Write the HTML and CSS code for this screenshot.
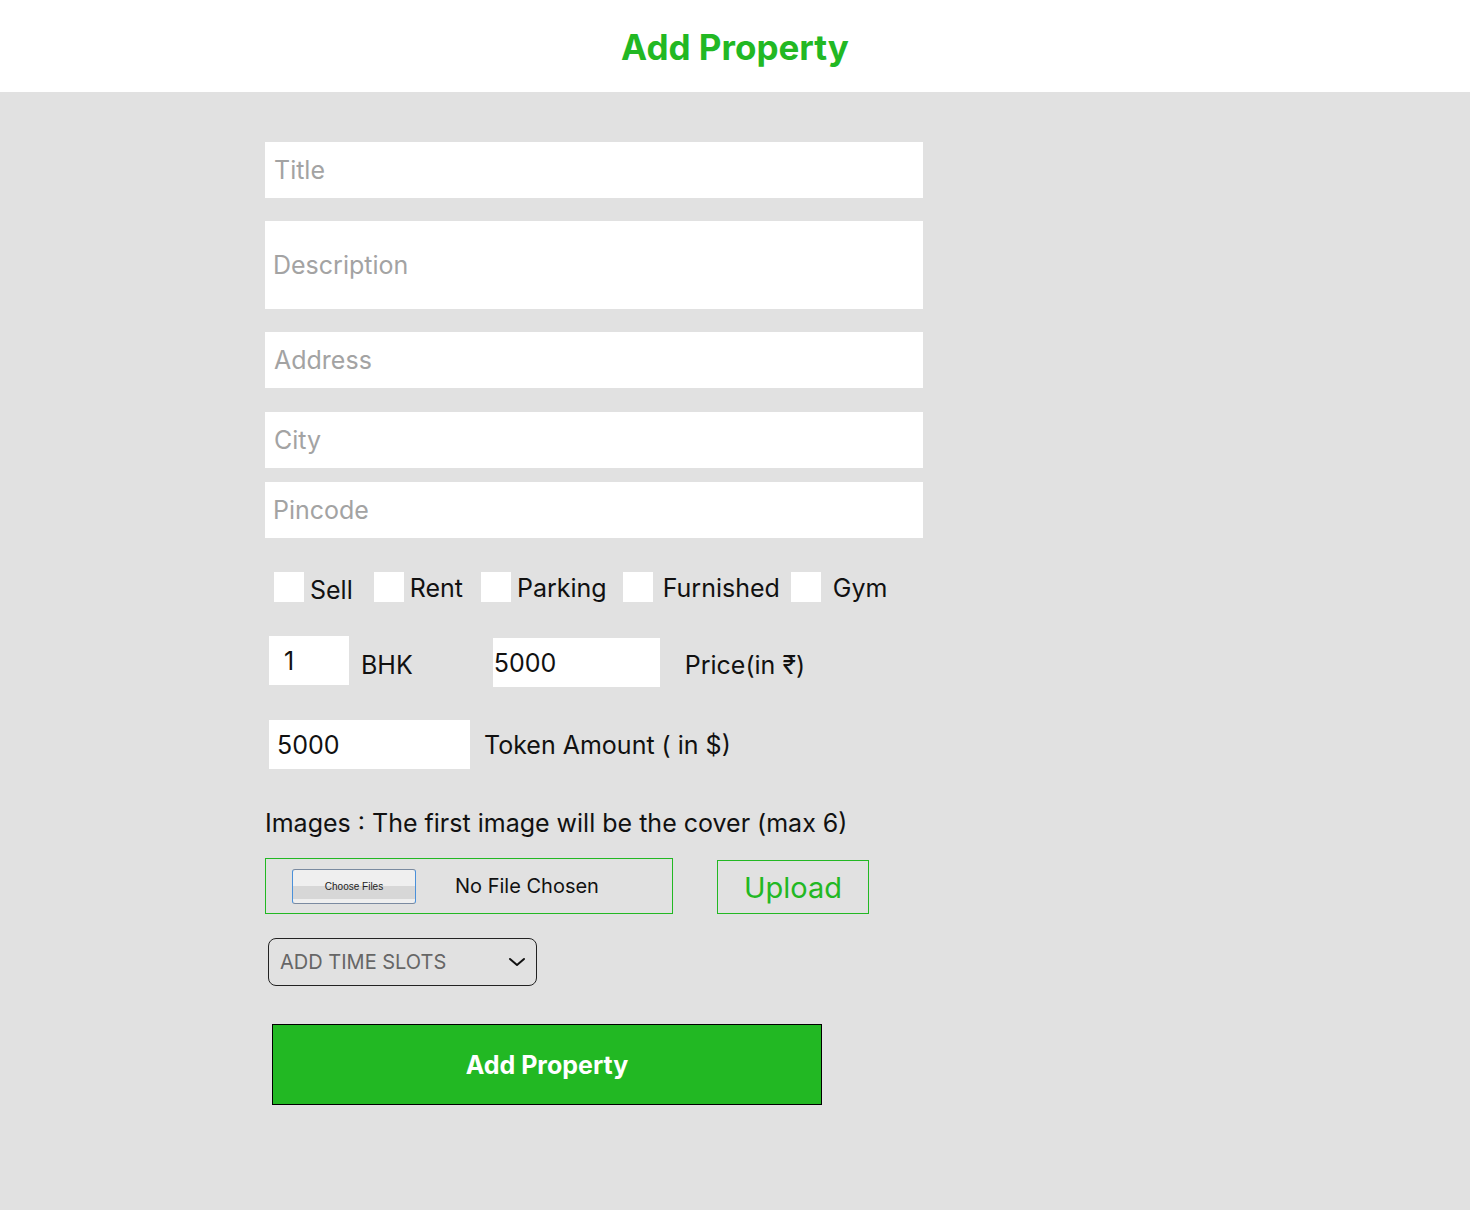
FILE: index.html
```html
<!DOCTYPE html>
<html lang="en">
<head>
<meta charset="utf-8">
<title>Add Property</title>
<link rel="stylesheet" href="styles.css">
</head>
<body>
<header class="topbar">
  <h1 class="page-title">Add Property</h1>
</header>
<main class="main">
  <form class="form">
    <input class="field field-title" type="text" placeholder="Title">
    <input class="field field-desc" type="text" placeholder="Description">
    <input class="field field-address" type="text" placeholder="Address">
    <input class="field field-city" type="text" placeholder="City">
    <input class="field field-pin" type="text" placeholder="Pincode">

    <div class="checks">
      <label class="check check-sell"><span class="box"></span><span class="check-text sell-text">Sell</span></label>
      <label class="check check-rent"><span class="box"></span><span class="check-text">Rent</span></label>
      <label class="check check-parking"><span class="box"></span><span class="check-text">Parking</span></label>
      <label class="check check-furnished"><span class="box"></span><span class="check-text wide">Furnished</span></label>
      <label class="check check-gym"><span class="box"></span><span class="check-text wider">Gym</span></label>
    </div>

    <div class="row row-bhk">
      <div class="num num-bhk">1</div>
      <span class="row-label bhk-label">BHK</span>
      <div class="num num-price">5000</div>
      <span class="row-label price-label">Price(in ₹)</span>
    </div>

    <div class="row row-token">
      <div class="num num-token">5000</div>
      <span class="row-label token-label">Token Amount ( in $)</span>
    </div>

    <p class="images-note">Images : The first image will be the cover (max 6)</p>

    <div class="upload-row">
      <div class="file-box">
        <span class="choose-btn">Choose Files</span>
        <span class="file-text">No File Chosen</span>
      </div>
      <button type="button" class="upload-btn">Upload</button>
    </div>

    <div class="select">
      <span class="select-text">ADD TIME SLOTS</span>
      <svg class="chev" width="18" height="10" viewBox="0 0 18 10"><path d="M2 2 L9 8 L16 2" fill="none" stroke="#111" stroke-width="2" stroke-linecap="round" stroke-linejoin="round"/></svg>
    </div>

    <button type="button" class="submit">Add Property</button>
  </form>
</main>
</body>
</html>
```
FILE: styles.css
```css
* { box-sizing: border-box; }
html, body { margin: 0; padding: 0; }
body {
  font-family: Inter, "Noto Sans", sans-serif;
  color: #111;
  background: #e1e1e1;
}
.topbar {
  height: 92px;
  background: #fff;
  display: flex;
  align-items: center;
  justify-content: center;
}
.page-title {
  margin: 0;
  font-size: 35px;
  font-weight: 700;
  color: #22b823;
  line-height: 1;
  position: relative;
  top: 1px;
}
.main {
  background: #e1e1e1;
  min-height: 1118px;
  padding: 50px 0 0 265px;
}
.form {
  width: 658px;
  display: flex;
  flex-direction: column;
  align-items: flex-start;
}
.field {
  display: block;
  width: 658px;
  height: 56px;
  border: none;
  outline: none;
  background: #fff;
  font-family: Inter, sans-serif;
  font-size: 25px;
  padding: 0 9px;
  color: #111;
}
.field::placeholder { color: #a3a3a3; }
.field-desc { height: 88px; margin-top: 23px; padding-left: 8px; }
.field-address { margin-top: 23px; }
.field-city { margin-top: 24px; }
.field-pin { margin-top: 14px; padding-left: 8px; }

.checks {
  display: flex;
  align-items: center;
  margin: 34px 0 0 9px;
  height: 30px;
}
.check {
  display: flex;
  align-items: center;
  font-size: 25px;
}
.box {
  width: 30px;
  height: 30px;
  background: #fff;
  display: block;
}
.check-text { margin-left: 6px; line-height: 30px; position: relative; top: 1px; }
.sell-text { top: 3px; }
.check-text.wide { margin-left: 10px; }
.check-text.wider { margin-left: 12px; }
.check-sell { margin-right: 21px; }
.check-rent { margin-right: 18px; }
.check-parking { margin-right: 16px; }
.check-furnished { margin-right: 11px; }

.row {
  display: flex;
  align-items: center;
  font-size: 25px;
}
.row-bhk { margin: 35px 0 0 4px; }
.row-bhk .row-label { position: relative; top: 3px; }
.num {
  background: #fff;
  height: 49px;
  display: flex;
  align-items: center;
  font-size: 25px;
}
.num-bhk { width: 80px; padding-left: 15px; position: relative; top: -1px; }
.num-price { width: 167px; padding-left: 1px; position: relative; top: 1px; }
.num-token { width: 201px; padding-left: 8px; }
.bhk-label { margin-left: 12px; }
.num-price { margin-left: 80px; }
.price-label { margin-left: 25px; }
.row-token { margin: 34px 0 0 4px; }
.token-label { margin-left: 14px; }

.images-note {
  margin: 39px 0 0;
  font-size: 25px;
  line-height: 30px;
}

.upload-row {
  display: flex;
  align-items: flex-end;
  margin-top: 20px;
}
.file-box {
  width: 408px;
  height: 56px;
  border: 1px solid #22b823;
  display: flex;
  align-items: center;
  padding-left: 26px;
}
.choose-btn {
  width: 124px;
  height: 35px;
  border: 1px solid #7a8aa0;
  border-left-color: #4a90d9;
  border-right-color: #4a90d9;
  border-radius: 3px;
  background: linear-gradient(#efefef 0, #efefef 47%, #d7d7d7 47%, #d7d7d7 88%, #efefef 88%);
  font-family: "Liberation Sans", Arial, sans-serif;
  font-size: 10px;
  color: #222;
  display: flex;
  align-items: center;
  justify-content: center;
}
.file-text {
  margin-left: 39px;
  font-size: 20px;
}
.upload-btn {
  margin-left: 44px;
  width: 152px;
  height: 54px;
  background: transparent;
  border: 1px solid #22b823;
  color: #22b823;
  font-family: Inter, sans-serif;
  font-size: 29px;
  padding: 0;
  cursor: pointer;
}

.select {
  margin: 24px 0 0 3px;
  width: 269px;
  height: 48px;
  border: 1.5px solid #222;
  border-radius: 8px;
  display: flex;
  align-items: center;
  justify-content: space-between;
  padding: 0 10px 0 11px;
}
.select-text {
  font-size: 20px;
  color: #666;
}

.submit {
  margin: 38px 0 0 7px;
  width: 550px;
  height: 81px;
  background: #22b823;
  border: 1px solid #000;
  color: #fff;
  font-family: Inter, sans-serif;
  font-size: 25px;
  font-weight: 700;
  padding: 0;
  cursor: pointer;
}
```
